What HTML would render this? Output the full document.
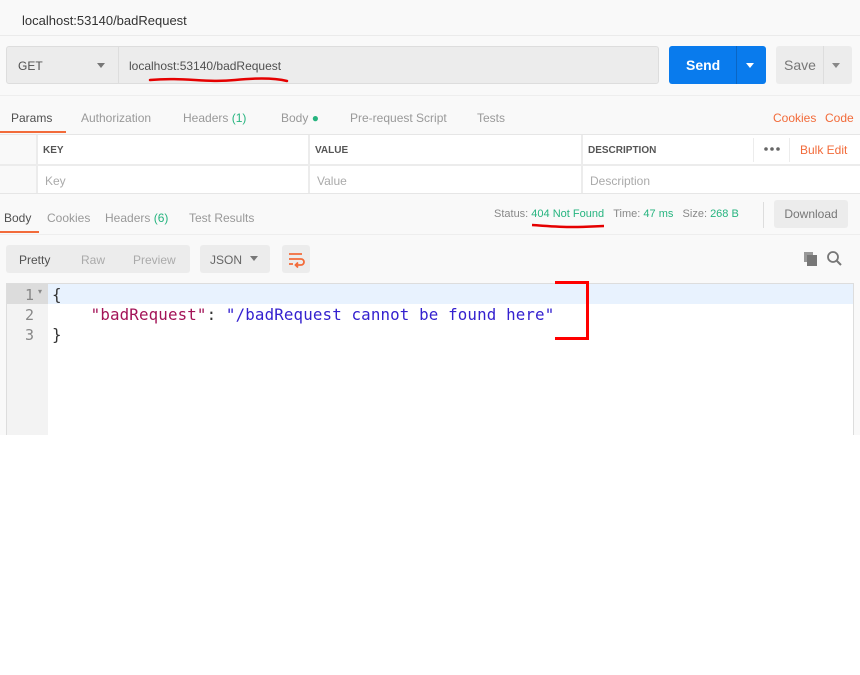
<!DOCTYPE html>
<html><head><meta charset="utf-8"><style>
*{box-sizing:border-box;margin:0;padding:0}
body{width:860px;height:675px;background:#fff;font-family:"Liberation Sans",sans-serif;position:relative;overflow:hidden}
.a{position:absolute}
.app{left:0;top:0;width:860px;height:435px;background:#f9f9f9}
.t{font-size:12px;color:#999;white-space:nowrap}
.g{color:#26b47f}
.o{color:#f26b3a}
</style></head><body>
<div class="a app"></div>
<div class="a" style="left:0;top:35px;width:860px;height:1px;background:#ebebeb"></div>
<div class="a" style="left:22px;top:13px;font-size:13px;color:#333">localhost:53140/badRequest</div>

<div class="a" style="left:6px;top:46px;width:653px;height:38px;background:#ececec;border:1px solid #ddd;border-radius:3px"></div>
<div class="a" style="left:118px;top:47px;width:1px;height:36px;background:#ddd"></div>
<div class="a" style="left:18px;top:59px;font-size:12px;color:#505050">GET</div>
<div class="a" style="left:97px;top:63px;border:4px solid transparent;border-top:5px solid #777"></div>
<div class="a" style="left:129px;top:59px;font-size:12px;color:#505050">localhost:53140/badRequest</div>
<svg class="a" style="left:145px;top:74px" width="150" height="12"><path d="M5 6 C40 3 60 9 90 6 C110 4 130 4 142 7" stroke="#e50000" stroke-width="2.5" fill="none" stroke-linecap="round"/></svg>

<div class="a" style="left:669px;top:46px;width:97px;height:38px;background:#097bed;border-radius:3px"></div>
<div class="a" style="left:736px;top:46px;width:1px;height:38px;background:#0a66c4"></div>
<div class="a" style="left:686px;top:57px;font-size:14px;color:#fff;font-weight:bold">Send</div>
<div class="a" style="left:746px;top:63px;border:4px solid transparent;border-top:5px solid #fff"></div>
<div class="a" style="left:776px;top:46px;width:76px;height:38px;background:#ececec;border-radius:3px"></div>
<div class="a" style="left:823px;top:46px;width:1px;height:38px;background:#ddd"></div>
<div class="a" style="left:784px;top:57px;font-size:14px;color:#777">Save</div>
<div class="a" style="left:832px;top:63px;border:4px solid transparent;border-top:5px solid #888"></div>

<div class="a" style="left:0;top:95px;width:860px;height:1px;background:#eee"></div>
<div class="a t" style="left:11px;top:111px;color:#505050">Params</div>
<div class="a" style="left:0;top:131px;width:66px;height:2px;background:#f26b3a"></div>
<div class="a t" style="left:81px;top:111px">Authorization</div>
<div class="a t" style="left:183px;top:111px">Headers <span class="g">(1)</span></div>
<div class="a t" style="left:281px;top:111px">Body <span class="g">●</span></div>
<div class="a t" style="left:350px;top:111px">Pre-request Script</div>
<div class="a t" style="left:477px;top:111px">Tests</div>
<div class="a t o" style="left:773px;top:111px">Cookies</div>
<div class="a t o" style="left:825px;top:111px">Code</div>

<div class="a" style="left:0;top:134px;width:860px;height:60px;background:#fff;border-top:1px solid #e6e6e6;border-bottom:1px solid #e6e6e6"></div>
<div class="a" style="left:0;top:135px;width:36px;height:58px;background:#f9f9f9"></div>
<div class="a" style="left:0;top:164px;width:860px;height:2px;background:#ececec"></div>
<div class="a" style="left:36px;top:135px;width:2px;height:58px;background:#ececec"></div>
<div class="a" style="left:308px;top:135px;width:2px;height:58px;background:#ececec"></div>
<div class="a" style="left:581px;top:135px;width:2px;height:58px;background:#ececec"></div>
<div class="a" style="left:753px;top:138px;width:1px;height:24px;background:#ececec"></div>
<div class="a" style="left:789px;top:138px;width:1px;height:24px;background:#ececec"></div>
<div class="a" style="left:43px;top:145px;font-size:10px;font-weight:bold;color:#555">KEY</div>
<div class="a" style="left:315px;top:145px;font-size:10px;font-weight:bold;color:#555">VALUE</div>
<div class="a" style="left:588px;top:145px;font-size:10px;font-weight:bold;color:#555">DESCRIPTION</div>
<svg class="a" style="left:763px;top:146px" width="20" height="6"><circle cx="3" cy="3" r="1.8" fill="#666"/><circle cx="9" cy="3" r="1.8" fill="#666"/><circle cx="15" cy="3" r="1.8" fill="#666"/></svg>
<div class="a t o" style="left:800px;top:143px">Bulk Edit</div>
<div class="a t" style="left:45px;top:174px;color:#aaa">Key</div>
<div class="a t" style="left:317px;top:174px;color:#aaa">Value</div>
<div class="a t" style="left:590px;top:174px;color:#aaa">Description</div>

<div class="a t" style="left:4px;top:211px;color:#505050">Body</div>
<div class="a" style="left:0;top:231px;width:39px;height:2px;background:#f26b3a"></div>
<div class="a t" style="left:47px;top:211px">Cookies</div>
<div class="a t" style="left:105px;top:211px">Headers <span class="g">(6)</span></div>
<div class="a t" style="left:189px;top:211px">Test Results</div>
<div class="a" style="left:494px;top:208px;font-size:11px;color:#888">Status: <span class="g">404 Not Found</span>&nbsp;&nbsp;&nbsp;Time: <span class="g">47 ms</span>&nbsp;&nbsp;&nbsp;Size: <span class="g">268 B</span></div>
<svg class="a" style="left:528px;top:220px" width="82" height="12"><path d="M4 5 C20 6 30 7 45 7 C60 7 70 6 76 6" stroke="#e50000" stroke-width="2.5" fill="none"/></svg>
<div class="a" style="left:763px;top:202px;width:1px;height:26px;background:#ddd"></div>
<div class="a" style="left:774px;top:200px;width:74px;height:28px;background:#ececec;border-radius:3px;font-size:12px;color:#777;text-align:center;line-height:28px">Download</div>
<div class="a" style="left:0;top:234px;width:860px;height:1px;background:#eee"></div>

<div class="a" style="left:6px;top:245px;width:184px;height:28px;background:#ececec;border-radius:3px"></div>
<div class="a t" style="left:19px;top:253px;color:#505050">Pretty</div>
<div class="a t" style="left:81px;top:253px;color:#aaa">Raw</div>
<div class="a t" style="left:133px;top:253px;color:#aaa">Preview</div>
<div class="a" style="left:200px;top:245px;width:70px;height:28px;background:#ececec;border-radius:3px"></div>
<div class="a t" style="left:210px;top:253px;color:#666">JSON</div>
<div class="a" style="left:250px;top:256px;border:4px solid transparent;border-top:5px solid #777"></div>
<div class="a" style="left:282px;top:245px;width:28px;height:28px;background:#ececec;border-radius:3px"></div>
<svg class="a" style="left:286px;top:249px" width="20" height="20"><path d="M3 5H16M3 10H15a3 3 0 0 1 0 6H10M12 13.5 9.5 16 12 18.5M3 15H7" stroke="#f26b3a" stroke-width="1.8" fill="none"/></svg>
<svg class="a" style="left:802px;top:250px" width="40" height="18"><rect x="2" y="2" width="9" height="10" fill="#999"/><rect x="5" y="5" width="10" height="11" fill="#777"/><circle cx="31" cy="7" r="5" stroke="#777" stroke-width="1.8" fill="none"/><path d="M35 11 39 15" stroke="#777" stroke-width="2"/></svg>

<div class="a" style="left:6px;top:283px;width:848px;height:152px;background:#fff;border:1px solid #ddd;border-bottom:none"></div>
<div class="a" style="left:7px;top:284px;width:41px;height:151px;background:#f3f3f3"></div>
<div class="a" style="left:7px;top:284px;width:41px;height:20px;background:#dcdcdc"></div>
<div class="a" style="left:48px;top:284px;width:805px;height:20px;background:#e8f2fe"></div>
<div class="a" style="left:0;top:285px;font-family:'DejaVu Sans Mono','Liberation Mono',monospace;font-size:15px;line-height:20px;color:#888;width:34px;text-align:right">1<br>2<br>3</div>
<div class="a" style="left:38px;top:287px;font-size:8px;color:#888">▾</div>
<div class="a" style="left:52px;top:285px;font-family:'DejaVu Sans Mono','Liberation Mono',monospace;font-size:15.8px;letter-spacing:0.15px;line-height:20px;color:#333;white-space:pre">{
    <span style="color:#a31357">"badRequest"</span>: <span style="color:#3421cf">"/badRequest cannot be found here"</span>
}</div>
<div class="a" style="left:555px;top:281px;width:34px;height:59px;border:3px solid #f00;border-left:none"></div>
</body></html>
